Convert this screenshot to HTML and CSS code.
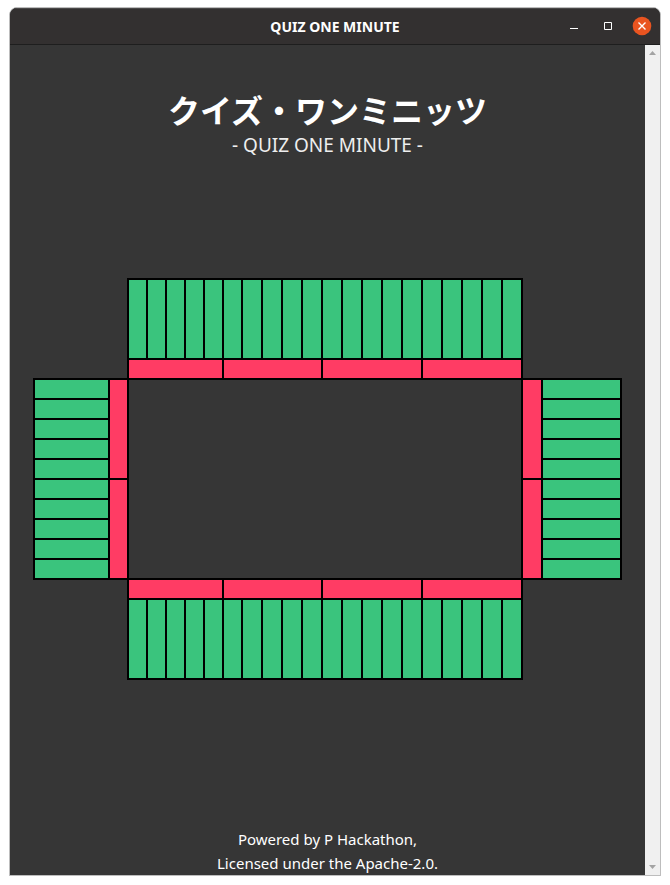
FILE: index.html
```html
<!DOCTYPE html>
<html lang="ja">
<head>
<meta charset="utf-8">
<meta name="viewport" content="width=device-width, initial-scale=1">
<title>QUIZ ONE MINUTE</title>
<link rel="stylesheet" href="styles.css">
</head>
<body>
<div class="window">
  <header class="titlebar">
    <span class="titlebar-text">QUIZ ONE MINUTE</span>
    <div class="controls">
      <button class="control" type="button" aria-label="Minimize"><svg viewBox="0 0 20 20"><path d="M6 12.5h8" stroke="#fff"/></svg></button>
      <button class="control" type="button" aria-label="Maximize"><svg viewBox="0 0 20 20"><path d="M6.500 6.500h7v7h-7z" fill="none" stroke="#fff"/></svg></button>
      <button class="control" type="button" aria-label="Close"><svg viewBox="0 0 20 20"><circle cx="10" cy="10" r="9.300" fill="#e95420"/><path d="M6.500 6.500l7 7m0-7l-7 7" stroke="#fff" stroke-width="1.400"/></svg></button>
    </div>
  </header>
  <div class="body">
    <main class="content">
      <div class="heading">
        <h1 class="title">クイズ・ワンミニッツ</h1>
        <p class="subtitle">- QUIZ ONE MINUTE -</p>
      </div>
      <div class="board">
        <div class="seats seats-top"><i></i><i></i><i></i><i></i><i></i><i></i><i></i><i></i><i></i><i></i><i></i><i></i><i></i><i></i><i></i><i></i><i></i><i></i><i></i><i></i></div>
        <div class="bars bars-top"><i></i><i></i><i></i><i></i></div>
        <div class="seats seats-left"><i></i><i></i><i></i><i></i><i></i><i></i><i></i><i></i><i></i><i></i></div>
        <div class="bars bars-left"><i></i><i></i></div>
        <div class="bars bars-right"><i></i><i></i></div>
        <div class="seats seats-right"><i></i><i></i><i></i><i></i><i></i><i></i><i></i><i></i><i></i><i></i></div>
        <div class="bars bars-bottom"><i></i><i></i><i></i><i></i></div>
        <div class="seats seats-bottom"><i></i><i></i><i></i><i></i><i></i><i></i><i></i><i></i><i></i><i></i><i></i><i></i><i></i><i></i><i></i><i></i><i></i><i></i><i></i><i></i></div>
      </div>
      <footer class="credits">Powered by P Hackathon,<br>Licensed under the Apache-2.0.</footer>
    </main>
    <div class="scrollbar">
      <button class="arrow" type="button" aria-label="Scroll up"><svg viewBox="0 0 15 15"><path d="M4 10l3.500-4 3.500 4z" fill="#a3a3a3"/></svg></button>
      <button class="arrow" type="button" aria-label="Scroll down"><svg viewBox="0 0 15 15"><path d="M4 5l3.500 4 3.500-4z" fill="#a3a3a3"/></svg></button>
    </div>
  </div>
</div>
</body>
</html>
```
FILE: styles.css
```css
* {
  box-sizing: border-box;
}

body {
  margin: 0;
  padding: 7px 9px 9px;
  min-height: 100vh;
  display: flex;
  background: #fff;
  color: #fff;
  font-family: "Noto Sans", "Noto Sans CJK JP", sans-serif;
}

button {
  padding: 0;
  border: 0;
  background: none;
}

svg {
  display: block;
  width: 100%;
}

.window {
  flex: 1;
  display: flex;
  flex-direction: column;
  border: 1px solid #bdbdbd;
  border-radius: 8px 8px 0 0;
  background: #363636;
  overflow: hidden;
}

.titlebar {
  display: grid;
  grid-template-columns: 1fr auto 1fr;
  align-items: center;
  height: 37px;
  padding: 0 8px;
  border-top: 1px solid #4a4848;
  border-bottom: 1px solid #1e1e1e;
  background: #333030;
}

.titlebar-text {
  grid-column: 2;
  font-size: 14px;
  font-weight: 700;
  line-height: 20px;
}

.controls {
  display: flex;
  justify-content: flex-end;
  gap: 14px;
  padding-bottom: 2px;
}

.control {
  width: 20px;
  height: 20px;
}

.body {
  flex: 1;
  display: flex;
}

.content {
  flex: 1;
  display: flex;
  flex-direction: column;
  padding: 0 25px;
  text-align: center;
}

.heading {
  padding-top: 44px;
}

.title {
  margin: 0;
  font-family: "Noto Sans CJK JP", sans-serif;
  font-size: 32px;
  font-weight: 700;
  line-height: 40px;
}

.subtitle {
  margin: 0;
  color: #eee;
  font-size: 19px;
  line-height: 32px;
}

.board {
  display: grid;
  grid-template-columns: 73fr repeat(7, 17fr) repeat(15, 18fr) 77fr;
  grid-template-rows: 78px repeat(12, 18px) 78px;
  gap: 2px;
  margin-top: 119px;
}

.board i {
  outline: 2px solid #000;
}

.seats,
.bars {
  display: grid;
}

.seats i {
  background: #3ac47d;
}

.bars i {
  background: #ff3c64;
}

.seats-top,
.bars-top,
.bars-bottom,
.seats-bottom {
  grid-column: 3 / 23;
  grid-template-columns: subgrid;
}

.bars-top i,
.bars-bottom i {
  grid-column: span 5;
}

.seats-left,
.bars-left,
.bars-right,
.seats-right {
  grid-row: 3 / 13;
  grid-template-rows: subgrid;
}

.bars-left i,
.bars-right i {
  grid-row: span 5;
}

.seats-top { grid-row: 1; }
.bars-top { grid-row: 2; }
.bars-bottom { grid-row: 13; }
.seats-bottom { grid-row: 14; }

.seats-left { grid-column: 1; }
.bars-left { grid-column: 2; }
.bars-right { grid-column: 23; }
.seats-right { grid-column: 24; }

.credits {
  margin-top: auto;
  font-size: 15px;
  line-height: 24px;
}

.scrollbar {
  display: flex;
  flex-direction: column;
  justify-content: space-between;
  width: 15px;
  background: #f0f0f0;
}

.arrow {
  width: 15px;
  height: 15px;
}
```
